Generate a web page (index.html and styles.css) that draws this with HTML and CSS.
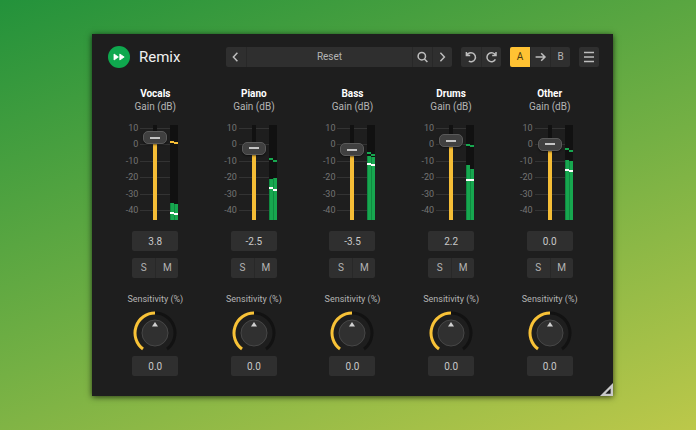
FILE: index.html
```html
<!DOCTYPE html>
<html lang="en">
<head>
    <meta charset="UTF-8">
    <meta name="viewport" content="width=device-width, initial-scale=1.0">
    <title>Remix</title>
    <link rel="stylesheet" href="styles.css">
</head>
<body>
    <main class="plugin">
        <!-- Toolbar -->
        <header class="toolbar">
            <svg class="logo" viewBox="0 0 22 22" aria-hidden="true">
                <circle cx="11" cy="11" r="11" fill="#0fa84e"/>
                <path d="M6 8 10.4 11 6 14Z M11.8 8 16.2 11 11.8 14Z" fill="#fff" stroke="#fff" stroke-width=".8" stroke-linejoin="round"/>
            </svg>
            <h1>Remix</h1>

            <div class="group presets">
                <button aria-label="Previous preset">
                    <svg class="icon" viewBox="0 0 16 16"><path d="M9.4 3.8 5.4 8l4 4.2"/></svg>
                </button>
                <button class="preset-name">Reset</button>
                <button aria-label="Search presets">
                    <svg class="icon" viewBox="0 0 16 16"><circle cx="6.8" cy="7.2" r="3.7"/><path d="m9.2 9.8 3.2 3.2"/></svg>
                </button>
                <button aria-label="Next preset">
                    <svg class="icon" viewBox="0 0 16 16"><path d="M5.4 3.8 9.4 8l-4 4.2"/></svg>
                </button>
            </div>

            <div class="group">
                <button aria-label="Undo">
                    <svg class="icon" viewBox="0 0 16 16"><path d="M3.4 3v3.6h3.8M3.8 6.4A4.5 4.5 0 1 1 5.8 12.2"/></svg>
                </button>
                <button aria-label="Redo">
                    <svg class="icon" viewBox="0 0 16 16"><path d="M12 3v3.6H8.2M11.6 6.4A4.5 4.5 0 1 0 11.4 10.4"/></svg>
                </button>
            </div>

            <div class="group">
                <button class="active">A</button>
                <button aria-label="Copy A to B">
                    <svg class="icon" viewBox="0 0 16 16"><path d="M2.6 8h9.4M8.2 4.2 12 8l-3.8 3.8"/></svg>
                </button>
                <button>B</button>
            </div>

            <div class="group">
                <button aria-label="Menu">
                    <svg class="icon" viewBox="0 0 16 16"><path d="M3 3.5h10M3 8h10M3 12.5h10"/></svg>
                </button>
            </div>
        </header>

        <!-- Channel strips, filled in by script.js -->
        <section class="channels" id="channels"></section>

        <svg class="resize-grip" viewBox="0 0 13 13" aria-hidden="true">
            <path d="M13 0V13H0Z" fill="#c9c9c9"/>
            <path d="M10.6 5.6V10.8H5.4Z" fill="#1c1c1c"/>
        </svg>
    </main>

    <script src="script.js"></script>
</body>
</html>
```

FILE: styles.css
```css
* {
    box-sizing: border-box;
}

body {
    font-family: Roboto, Arial, sans-serif;
    font-size: 10px;
    line-height: 12px;
    color: #b4b4b4;
    margin: 0;
    padding: 34px 83px 34px 92px;
    min-height: 100vh;
    background: linear-gradient(160deg, #23923b 0%, #74b044 55%, #bcc84a 100%);
}

.plugin {
    position: relative;
    background-color: #1e1e1e;
    padding: 12px 14px 20px;
    box-shadow: 0 1px 6px rgba(0, 0, 0, 0.7);
}

/* Toolbar */
.toolbar {
    display: flex;
    align-items: center;
    gap: 9px;
    padding-left: 2px;
    margin-bottom: 20px;
}

.logo {
    width: 22px;
    height: 22px;
}

h1 {
    flex: 1;
    margin: 0;
    font-size: 15px;
    line-height: 22px;
    font-weight: 400;
    color: #f0f0f0;
}

.group {
    display: flex;
    background-color: #2f2f2f;
    border-radius: 2px;
    overflow: hidden;
}

button {
    flex: 1 0 20px;
    display: flex;
    align-items: center;
    justify-content: center;
    height: 20px;
    padding: 0;
    font: inherit;
    color: inherit;
    background: none;
    border: none;
    border-left: 1px solid #282828;
    cursor: pointer;
}

button:first-child {
    border-left: none;
}

button:hover {
    background-color: #3a3a3a;
}

button.active {
    color: #4a3a10;
    background-color: #ffc233;
}

.presets {
    width: 44%;
    flex: 0 1 226px;
}

.presets button {
    flex: 0 0 20px;
}

.presets .preset-name {
    flex: 1;
}

.icon {
    width: 16px;
    height: 16px;
    fill: none;
    stroke: #bdbdbd;
    stroke-width: 1.5;
}

/* Channel strips */
.channels {
    display: grid;
    grid-template-columns: repeat(5, 1fr);
}

.channel {
    display: flex;
    flex-direction: column;
    align-items: center;
}

h2 {
    margin: 0 0 1px;
    font-size: 10px;
    line-height: 12px;
    font-weight: 700;
    color: #fff;
}

.gain {
    display: grid;
    grid-template-columns: 1fr 30px 1fr;
    width: 100%;
    height: 98px;
    margin: 9px 0 11px;
}

.scale {
    display: flex;
    flex-direction: column;
    justify-content: space-between;
    height: 94px;
    padding-right: 2px;
    font-size: 9px;
    text-align: right;
    color: #747474;
}

.fader {
    display: grid;
}

.ticks,
.fader input {
    grid-area: 1 / 1;
}

.ticks {
    display: flex;
    flex-direction: column;
    justify-content: space-between;
    height: 94px;
    padding: 6px 0 5px;
}

.ticks span {
    height: 1px;
    background-color: #333;
}

/* The thumb may overhang the track by half its height at both ends */
.fader input {
    appearance: none;
    writing-mode: vertical-lr;
    direction: rtl;
    justify-self: center;
    width: 24px;
    height: 108px;
    margin: -4px 0 -6px;
    cursor: pointer;
    background: linear-gradient(to top, #f5bd36 var(--fill), #111 var(--fill)) center / 4px 95px no-repeat;
}

.fader input::-webkit-slider-thumb {
    appearance: none;
    width: 24px;
    height: 13px;
    border: 1px solid #5a5a5a;
    border-radius: 5px;
    background: linear-gradient(#c4c4c4, #c4c4c4) center / 10px 2px no-repeat #404040;
    box-shadow: 0 1px 2px rgba(0, 0, 0, 0.5);
}

.meters {
    display: flex;
    height: 95px;
    margin-top: 3px;
}

.meter {
    position: relative;
    width: 4px;
    background-color: #111;
}

.meter span {
    position: absolute;
    left: 0;
    width: 100%;
}

.meter .level {
    bottom: 0;
    background-color: #17a74f;
    border-left: 1px solid #0f8a40;
}

.meter .rms,
.meter .peak {
    height: 2px;
    margin-bottom: -1px;
    background-color: #17a74f;
}

.meter .rms {
    background-color: #fff;
}

.meter .peak.hot {
    background-color: #f5bd36;
}

.value {
    width: 46px;
    height: 20px;
    padding: 0;
    border: none;
    border-radius: 2px;
    font: inherit;
    text-align: center;
    color: #c8c8c8;
    background-color: #2f2f2f;
}

.solo-mute {
    width: 46px;
    margin: 7px 0 15px;
}

.sensitivity {
    font-size: 9px;
}

.knob {
    position: relative;
    width: 44px;
    height: 44px;
    margin: 6px 0 1px;
}

.knob svg {
    display: block;
}

.knob input {
    position: absolute;
    inset: 0;
    width: 100%;
    height: 100%;
    margin: 0;
    opacity: 0;
    cursor: pointer;
}

.resize-grip {
    position: absolute;
    right: 0;
    bottom: 0;
    width: 13px;
    height: 13px;
    cursor: nwse-resize;
}
```

FILE: script.js
```js
const MIN_DB = -46;
const MAX_DB = 12;

// All values in dB; level, rms and peak hold the left and right meter
const channels = [
    { name: 'Vocals', gain: 3.8, level: [-35.6, -36.2], rms: [-41.7, -42.6], peak: [1.6, 1.0] },
    { name: 'Piano', gain: -2.5, level: [-21.0, -20.4], rms: [-26.5, -27.7], peak: [-8.8, -10.0] },
    { name: 'Bass', gain: -3.5, level: [-6.9, -7.5], rms: [-11.8, -12.1], peak: [-5.1, -6.3] },
    { name: 'Drums', gain: 2.2, level: [-12.7, -14.9], rms: [-21.6, -21.6], peak: [-0.2, -0.8] },
    { name: 'Other', gain: 0, level: [-9.1, -10.0], rms: [-15.5, -16.1], peak: [-2.7, -3.6] }
];

const scale = [10, 0, -10, -20, -30, -40];

// Position of a dB value on the track, in percent from the bottom
function toPercent(db) {
    return ((db - MIN_DB) / (MAX_DB - MIN_DB) * 100).toFixed(1);
}

function meter(channel, side) {
    const hot = channel.peak[side] > 0 ? 'hot' : '';
    return `
        <div class="meter">
            <span class="level" style="height: ${toPercent(channel.level[side])}%"></span>
            <span class="rms" style="bottom: ${toPercent(channel.rms[side])}%"></span>
            <span class="peak ${hot}" style="bottom: ${toPercent(channel.peak[side])}%"></span>
        </div>`;
}

const container = document.getElementById('channels');

channels.forEach((channel, i) => {
    const strip = document.createElement('div');
    strip.classList.add('channel');
    strip.innerHTML = `
        <h2>${channel.name}</h2>
        <label for="gain${i}">Gain (dB)</label>
        <div class="gain">
            <div class="scale">${scale.map(db => `<span>${db}</span>`).join('')}</div>
            <div class="fader">
                <div class="ticks">${scale.map(() => '<span></span>').join('')}</div>
                <input type="range" min="${MIN_DB}" max="${MAX_DB}" step="0.1" value="${channel.gain}"
                    aria-label="${channel.name} gain" style="--fill: ${toPercent(channel.gain)}%">
            </div>
            <div class="meters">${meter(channel, 0)}${meter(channel, 1)}</div>
        </div>
        <input class="value" type="text" id="gain${i}" value="${channel.gain.toFixed(1)}">
        <div class="group solo-mute">
            <button aria-label="Solo ${channel.name}">S</button>
            <button aria-label="Mute ${channel.name}">M</button>
        </div>
        <label class="sensitivity" for="sensitivity${i}">Sensitivity (%)</label>
        <div class="knob">
            <svg width="44" height="44" viewBox="0 0 44 44" fill="none">
                <path d="M22 2A20 20 0 0 1 34 38" stroke="#121212" stroke-width="3"/>
                <path d="M10 38A20 20 0 0 1 22 2" stroke="#f8c237" stroke-width="3"/>
                <circle cx="22" cy="22" r="13" fill="#303030" stroke="#474747"/>
                <path d="M22 11 25 15.5H19Z" fill="#d0d0d0"/>
            </svg>
            <input type="range" min="-100" max="100" value="0" aria-label="${channel.name} sensitivity">
        </div>
        <input class="value" type="text" id="sensitivity${i}" value="0.0">`;

    // Keep the fader and its number in step
    const fader = strip.querySelector('.fader input');
    fader.addEventListener('input', () => {
        fader.style.setProperty('--fill', toPercent(fader.value) + '%');
        strip.querySelector('.value').value = Number(fader.value).toFixed(1);
    });

    container.appendChild(strip);
});
```
